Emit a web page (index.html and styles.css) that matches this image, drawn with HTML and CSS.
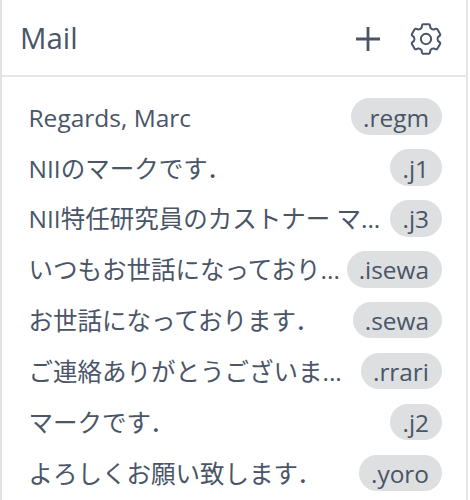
FILE: index.html
```html
<!DOCTYPE html>
<html lang="ja">
<head>
    <meta charset="utf-8">
    <title>Mail</title>
    <link rel="stylesheet" href="styles.css">
</head>
<body>
    <div class="panel">
        <div class="header">
            <h1 class="title">Mail</h1>
            <svg class="icon-add" viewBox="0 0 26 26"><path d="M13 1v24M1 13h24"/></svg>
            <svg class="icon-gear" viewBox="-48 -48 96 96">
                <path d="M-13-34L-12-41Q-11-44-9-44H9Q11-44 12-41L13-34Q17-28 22.9-28.3L29.5-30.9Q32.6-31.5 33.6-29.8L42.6-14.2Q43.6-12.5 41.5-10.1L36-5.7Q33 0 36 5.7L41.5 10.1Q43.6 12.5 42.6 14.2L33.6 29.8Q32.6 31.5 29.5 30.9L22.9 28.3Q17 28 13 34L12 41Q11 44 9 44H-9Q-11 44-12 41L-13 34Q-17 28-22.9 28.3L-29.5 30.9Q-32.6 31.5-33.6 29.8L-42.6 14.2Q-43.6 12.5-41.5 10.1L-36 5.7Q-33 0-36-5.7L-41.5-10.1Q-43.6-12.5-42.6-14.2L-33.6-29.8Q-32.6-31.5-29.5-30.9L-22.9-28.3Q-17-28-13-34Z"/>
                <circle cx="0" cy="0" r="15.5"/>
            </svg>
        </div>
        <ul class="list">
            <li class="row"><span class="name">Regards, Marc</span><span class="badge">.regm</span></li>
            <li class="row"><span class="name">NIIのマークです．</span><span class="badge">.j1</span></li>
            <li class="row"><span class="name">NII特任研究員のカストナー マ...</span><span class="badge">.j3</span></li>
            <li class="row"><span class="name">いつもお世話になっており...</span><span class="badge">.isewa</span></li>
            <li class="row"><span class="name">お世話になっております．</span><span class="badge">.sewa</span></li>
            <li class="row"><span class="name">ご連絡ありがとうございま...</span><span class="badge">.rrari</span></li>
            <li class="row"><span class="name">マークです．</span><span class="badge">.j2</span></li>
            <li class="row"><span class="name">よろしくお願い致します．</span><span class="badge">.yoro</span></li>
        </ul>
    </div>
</body>
</html>
```
FILE: styles.css
```css
body {
    margin: 0;
    background: #fff;
    color: #4a5568;
    font-family: "Open Sans", "Noto Sans CJK JP", sans-serif;
}
.panel {
    box-sizing: border-box;
    width: 468px;
    height: 500px;
    border-left: 2px solid #e2e2e2;
    border-right: 2px solid #e6e6e6;
    overflow: hidden;
}
.header {
    display: flex;
    align-items: center;
    box-sizing: border-box;
    height: 77px;
    padding: 0 24px 0 18px;
    border-bottom: 2px solid #e6e6e6;
}
.title {
    flex: 1;
    margin: 0;
    font-size: 29.4px;
    font-weight: 400;
}
.icon-add {
    width: 26px;
    height: 26px;
    margin-right: 29px;
}
.icon-gear {
    width: 32px;
    height: 32px;
    margin-top: 2px;
}
.icon-add, .icon-gear {
    fill: none;
    stroke: #4a5568;
}
.icon-add {
    stroke-width: 2.8;
    margin-top: 2px;
}
.icon-gear {
    stroke-width: 6;
    stroke-linejoin: round;
}
.list {
    margin: 0;
    padding: 14.3px 24px 0 26.5px;
    list-style: none;
}
.row {
    display: flex;
    align-items: center;
    justify-content: space-between;
    height: 50.86px;
    gap: 6px;
}
.name {
    min-width: 0;
    padding-top: 2.4px;
    font-size: 24.5px;
    line-height: 36.5px;
    white-space: nowrap;
}
.badge {
    flex: none;
    padding: 1.2px 13px 0 12px;
    border-radius: 19px;
    background: #dddfe0;
    font-size: 24.4px;
    line-height: 35.3px;
}
```
